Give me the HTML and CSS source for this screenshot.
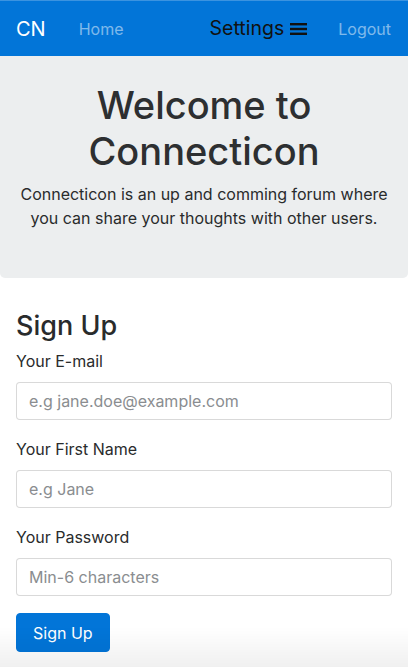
FILE: index.html
```html
<!DOCTYPE html>
<html lang="en">
<head>
<meta charset="utf-8">
<title>Connecticon</title>
<link rel="stylesheet" href="styles.css">
</head>
<body>
<nav class="navbar">
  <a class="brand" href="#">CN</a>
  <a class="nav-link" href="#">Home</a>
  <div class="nav-right">
    <a class="settings" href="#">Settings
      <svg class="burger" width="17" height="14" viewBox="0 0 17 14" aria-hidden="true">
        <rect x="0" y="1" width="17" height="2.4" fill="#111"/>
        <rect x="0" y="5.8" width="17" height="2.4" fill="#111"/>
        <rect x="0" y="10.6" width="17" height="2.4" fill="#111"/>
      </svg>
    </a>
    <a class="nav-link" href="#">Logout</a>
  </div>
</nav>
<header class="jumbotron">
  <h1 class="title">Welcome to Connecticon</h1>
  <p class="lead">Connecticon is an up and comming forum where you can share your thoughts with other users.</p>
</header>
<main class="container">
  <h2 class="form-title">Sign Up</h2>
  <form class="signup">
    <div class="form-group">
      <label class="label" for="email">Your E-mail</label>
      <input class="input" id="email" type="email" placeholder="e.g jane.doe@example.com">
    </div>
    <div class="form-group">
      <label class="label" for="fname">Your First Name</label>
      <input class="input" id="fname" type="text" placeholder="e.g Jane">
    </div>
    <div class="form-group">
      <label class="label" for="pw">Your Password</label>
      <input class="input" id="pw" type="password" placeholder="Min-6 characters">
    </div>
    <button class="btn" type="button">Sign Up</button>
  </form>
</main>
<div class="bottom-shade"></div>
</body>
</html>
```

FILE: styles.css
```css
* { box-sizing: border-box; }
html, body { margin: 0; padding: 0; }
body {
  font-family: Inter, "Liberation Sans", sans-serif;
  font-size: 16px;
  line-height: 1.5;
  color: #292b2c;
  background: #fff;
}
a { text-decoration: none; }

.navbar {
  display: flex;
  align-items: center;
  height: 56px;
  padding: 0 17px 0 16px;
  background: #0275d8;
  border-top: 1px solid #3b93e0;
}
.brand {
  color: #fff;
  font-size: 20px;
  margin-right: 33px;
}
.nav-link {
  color: rgba(255,255,255,0.5);
  font-size: 16px;
}
.nav-right {
  margin-left: auto;
  display: flex;
  align-items: center;
  gap: 31px;
}
.settings {
  display: flex;
  align-items: center;
  gap: 6px;
  color: #111;
  font-size: 19.5px;
}
.burger { display: block; }

.jumbotron {
  background: #eceeef;
  padding: 26px 16px 32px;
  margin-bottom: 32px;
  border-radius: 0 0 5px 5px;
  text-align: center;
}
.title {
  margin: 0 0 8px;
  font-size: 38px;
  font-weight: 500;
  line-height: 46px;
  padding: 0 70px;
  color: #2d2f31;
}
.lead {
  margin: 0 0 16px;
  font-size: 16px;
  line-height: 24px;
}

.container { padding: 0 16px; }
.form-title {
  margin: 0 0 8px;
  font-size: 27px;
  font-weight: 500;
  line-height: 31px;
}
.form-group { margin-bottom: 17px; }
.label {
  display: block;
  margin-bottom: 9px;
}
.input {
  display: block;
  width: 100%;
  height: 38px;
  padding: 8px 12px;
  font-family: inherit;
  font-size: 16px;
  line-height: 20px;
  color: #464a4c;
  background: #fff;
  border: 1px solid rgba(0,0,0,0.15);
  border-radius: 4px;
}
.input::placeholder { color: #8a8d90; opacity: 1; }
.btn {
  display: inline-block;
  height: 39px;
  padding: 8px 16px;
  font-family: inherit;
  font-size: 16px;
  line-height: 20px;
  color: #fff;
  background: #0275d8;
  border: 1px solid #0275d8;
  border-radius: 4px;
}
.bottom-shade {
  position: fixed;
  left: 0; right: 0; bottom: 0;
  height: 40px;
  pointer-events: none;
  background: linear-gradient(to bottom, rgba(0,0,0,0), rgba(0,0,0,0.06));
}
```
